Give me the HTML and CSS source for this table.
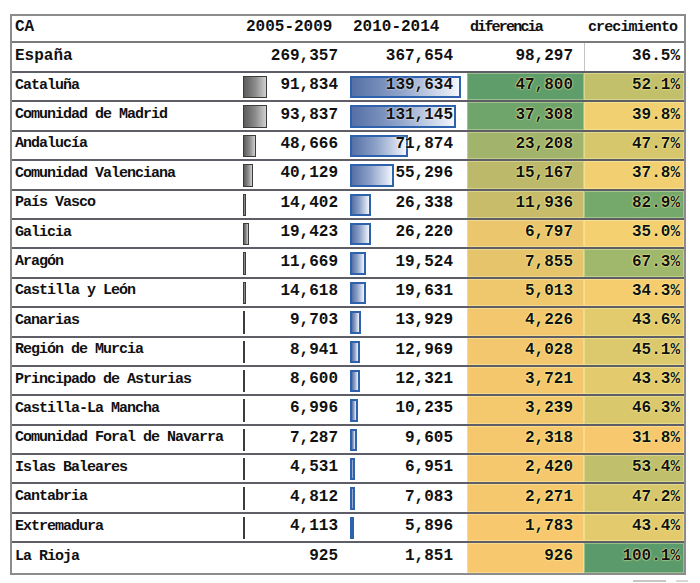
FILE: index.html
```html
<!DOCTYPE html>
<html lang="es">
<head>
<meta charset="utf-8">
<title>CA</title>
<link rel="stylesheet" href="styles.css">
</head>
<body>
<div class="page">
  <div class="tbl">
    <div class="row head">
      <div class="c name wide">CA</div>
      <div class="c hl">2005-2009</div>
      <div class="c hl">2010-2014</div>
      <div class="c hl narrow tight">diferencia</div>
      <div class="c hl narrow last">crecimiento</div>
    </div>
    <div class="row total">
      <div class="c name wide">España</div>
      <div class="c num v1">269,357</div>
      <div class="c num v2">367,654</div>
      <div class="c num dif">98,297</div>
      <div class="c num pct sep">36.5%</div>
    </div>
    <div class="row">
      <div class="c name">Cataluña</div>
      <div class="c num v1"><span class="bar gray" style="width:24px"></span><span class="t">91,834</span></div>
      <div class="c num v2"><span class="bar blue" style="width:111px"></span><span class="t">139,634</span></div>
      <div class="c num dif col" style="background:#5f9d6a">47,800</div>
      <div class="c num pct col" style="background:#c3c06b">52.1%</div>
    </div>
    <div class="row">
      <div class="c name">Comunidad de Madrid</div>
      <div class="c num v1"><span class="bar gray" style="width:24px"></span><span class="t">93,837</span></div>
      <div class="c num v2"><span class="bar blue" style="width:106px"></span><span class="t">131,145</span></div>
      <div class="c num dif col" style="background:#6fa46b">37,308</div>
      <div class="c num pct col" style="background:#f0d070">39.8%</div>
    </div>
    <div class="row">
      <div class="c name">Andalucía</div>
      <div class="c num v1"><span class="bar gray" style="width:13px"></span><span class="t">48,666</span></div>
      <div class="c num v2"><span class="bar blue" style="width:58px"></span><span class="t">71,874</span></div>
      <div class="c num dif col" style="background:#a2b36b">23,208</div>
      <div class="c num pct col" style="background:#d6c76c">47.7%</div>
    </div>
    <div class="row">
      <div class="c name">Comunidad Valenciana</div>
      <div class="c num v1"><span class="bar gray" style="width:10px"></span><span class="t">40,129</span></div>
      <div class="c num v2"><span class="bar blue" style="width:44px"></span><span class="t">55,296</span></div>
      <div class="c num dif col" style="background:#bdb96b">15,167</div>
      <div class="c num pct col" style="background:#f2cf70">37.8%</div>
    </div>
    <div class="row">
      <div class="c name">País Vasco</div>
      <div class="c num v1"><span class="bar gray" style="width:3px"></span><span class="t">14,402</span></div>
      <div class="c num v2"><span class="bar blue" style="width:21px"></span><span class="t">26,338</span></div>
      <div class="c num dif col" style="background:#c8bc6b">11,936</div>
      <div class="c num pct col" style="background:#75a86b">82.9%</div>
    </div>
    <div class="row">
      <div class="c name">Galicia</div>
      <div class="c num v1"><span class="bar gray" style="width:6px"></span><span class="t">19,423</span></div>
      <div class="c num v2"><span class="bar blue" style="width:21px"></span><span class="t">26,220</span></div>
      <div class="c num dif col" style="background:#ecc66d">6,797</div>
      <div class="c num pct col" style="background:#f4d070">35.0%</div>
    </div>
    <div class="row">
      <div class="c name">Aragón</div>
      <div class="c num v1"><span class="bar gray" style="width:3px"></span><span class="t">11,669</span></div>
      <div class="c num v2"><span class="bar blue" style="width:16px"></span><span class="t">19,524</span></div>
      <div class="c num dif col" style="background:#e6c46c">7,855</div>
      <div class="c num pct col" style="background:#a0b86b">67.3%</div>
    </div>
    <div class="row">
      <div class="c name">Castilla y León</div>
      <div class="c num v1"><span class="bar gray" style="width:3px"></span><span class="t">14,618</span></div>
      <div class="c num v2"><span class="bar blue" style="width:16px"></span><span class="t">19,631</span></div>
      <div class="c num dif col" style="background:#efc76d">5,013</div>
      <div class="c num pct col" style="background:#f5cd6f">34.3%</div>
    </div>
    <div class="row">
      <div class="c name">Canarias</div>
      <div class="c num v1"><span class="bar gray" style="width:2px"></span><span class="t">9,703</span></div>
      <div class="c num v2"><span class="bar blue" style="width:11px"></span><span class="t">13,929</span></div>
      <div class="c num dif col" style="background:#f2c76d">4,226</div>
      <div class="c num pct col" style="background:#e2cb6d">43.6%</div>
    </div>
    <div class="row">
      <div class="c name">Región de Murcia</div>
      <div class="c num v1"><span class="bar gray" style="width:2px"></span><span class="t">8,941</span></div>
      <div class="c num v2"><span class="bar blue" style="width:10px"></span><span class="t">12,969</span></div>
      <div class="c num dif col" style="background:#f2c76d">4,028</div>
      <div class="c num pct col" style="background:#dcc96d">45.1%</div>
    </div>
    <div class="row">
      <div class="c name">Principado de Asturias</div>
      <div class="c num v1"><span class="bar gray" style="width:2px"></span><span class="t">8,600</span></div>
      <div class="c num v2"><span class="bar blue" style="width:10px"></span><span class="t">12,321</span></div>
      <div class="c num dif col" style="background:#f4c76d">3,721</div>
      <div class="c num pct col" style="background:#e3cb6d">43.3%</div>
    </div>
    <div class="row">
      <div class="c name">Castilla-La Mancha</div>
      <div class="c num v1"><span class="bar gray" style="width:2px"></span><span class="t">6,996</span></div>
      <div class="c num v2"><span class="bar blue" style="width:8px"></span><span class="t">10,235</span></div>
      <div class="c num dif col" style="background:#f4c86d">3,239</div>
      <div class="c num pct col" style="background:#d9c86c">46.3%</div>
    </div>
    <div class="row">
      <div class="c name">Comunidad Foral de Navarra</div>
      <div class="c num v1"><span class="bar gray" style="width:2px"></span><span class="t">7,287</span></div>
      <div class="c num v2"><span class="bar blue" style="width:7px"></span><span class="t">9,605</span></div>
      <div class="c num dif col" style="background:#f6c86e">2,318</div>
      <div class="c num pct col" style="background:#f8c86e">31.8%</div>
    </div>
    <div class="row">
      <div class="c name">Islas Baleares</div>
      <div class="c num v1"><span class="bar gray" style="width:2px"></span><span class="t">4,531</span></div>
      <div class="c num v2"><span class="bar blue" style="width:5px"></span><span class="t">6,951</span></div>
      <div class="c num dif col" style="background:#f6c86e">2,420</div>
      <div class="c num pct col" style="background:#c0bf6b">53.4%</div>
    </div>
    <div class="row">
      <div class="c name">Cantabria</div>
      <div class="c num v1"><span class="bar gray" style="width:2px"></span><span class="t">4,812</span></div>
      <div class="c num v2"><span class="bar blue" style="width:5px"></span><span class="t">7,083</span></div>
      <div class="c num dif col" style="background:#f6c86e">2,271</div>
      <div class="c num pct col" style="background:#d7c76c">47.2%</div>
    </div>
    <div class="row">
      <div class="c name">Extremadura</div>
      <div class="c num v1"><span class="bar gray" style="width:2px"></span><span class="t">4,113</span></div>
      <div class="c num v2"><span class="bar blue" style="width:4px"></span><span class="t">5,896</span></div>
      <div class="c num dif col" style="background:#f7c86e">1,783</div>
      <div class="c num pct col" style="background:#e3cb6d">43.4%</div>
    </div>
    <div class="row">
      <div class="c name">La Rioja</div>
      <div class="c num v1"><span class="t">925</span></div>
      <div class="c num v2"><span class="t">1,851</span></div>
      <div class="c num dif col" style="background:#f8c86e">926</div>
      <div class="c num pct col" style="background:#5b9b6b">100.1%</div>
    </div>
  </div>
  <div class="foot">
    <span class="fb fb1"></span>
    <span class="fb fb2"></span>
  </div>
</div>
</body>
</html>
```

FILE: styles.css
```css
html, body {
  margin: 0;
  padding: 0;
  background: #ffffff;
}

body {
  font-family: "Liberation Mono", "DejaVu Sans Mono", monospace;
  color: #111111;
  overflow: hidden;
}

.page {
  padding: 14px 0 0 10px;
}

.tbl {
  width: 676px;
  box-sizing: border-box;
  border: 2px solid #8c8c8c;
  background: #ffffff;
}

.row {
  display: grid;
  grid-template-columns: 231px 107px 117px 117px 100px;
  height: 29.4px;
  box-sizing: border-box;
  border-bottom: 2px solid #5e5e66;
}

.row:last-child {
  border-bottom: 0;
}

.row.head {
  height: 27px;
  border-bottom-color: #7a7a7a;
}

.row.total {
  height: 30px;
}

.c {
  position: relative;
  display: flex;
  align-items: center;
  padding-bottom: 3px;
  box-sizing: border-box;
  font-weight: bold;
  white-space: nowrap;
  overflow: hidden;
}

.name {
  padding-left: 3px;
  font-size: 15px;
  letter-spacing: -1px;
}

.name.wide {
  font-size: 16px;
  letter-spacing: 0;
}

.hl {
  padding-left: 3px;
  font-size: 16px;
}

.hl.narrow {
  font-size: 15px;
  letter-spacing: -0.9px;
}

.hl.tight {
  letter-spacing: -1.8px;
}

.hl.last {
  padding-left: 4px;
}

.num {
  justify-content: flex-end;
  font-size: 16px;
}

.v1 {
  padding-right: 12px;
}

.v2 {
  padding-right: 14px;
}

.dif {
  padding-right: 11px;
}

.pct {
  padding-right: 4px;
}

.sep {
  border-left: 1px solid #c4c4c4;
}

.col {
  text-shadow: 0 0 2px #ffff9c, 0 0 1px #ffffb0;
  box-shadow: inset 0 0 0 1px rgba(255, 255, 200, 0.35);
}

.t {
  position: relative;
  z-index: 1;
  text-shadow: 0 0 2px #ffffff;
}

.bar {
  position: absolute;
  left: 0;
  top: 3px;
  bottom: 2px;
  box-sizing: border-box;
}

.bar.gray {
  border: 1px solid #3c3c3c;
  background: linear-gradient(to right, #5c5c5c, #8a8a8a 50%, #cfcfcf);
}

.bar.blue {
  border: 2px solid #2f62ad;
  background: linear-gradient(to right, #5570a6, #8ea2c9 45%, #dfe6f3 90%, #f4f7fc);
}

.foot {
  display: flex;
  justify-content: flex-end;
  gap: 10px;
  margin-top: 5px;
  width: 678px;
}

.fb {
  display: block;
  height: 8px;
  border-top: 2px solid #c6c6c6;
}

.fb1 {
  width: 33px;
}

.fb2 {
  width: 12px;
  border-top-color: #d8d8d8;
}
```
